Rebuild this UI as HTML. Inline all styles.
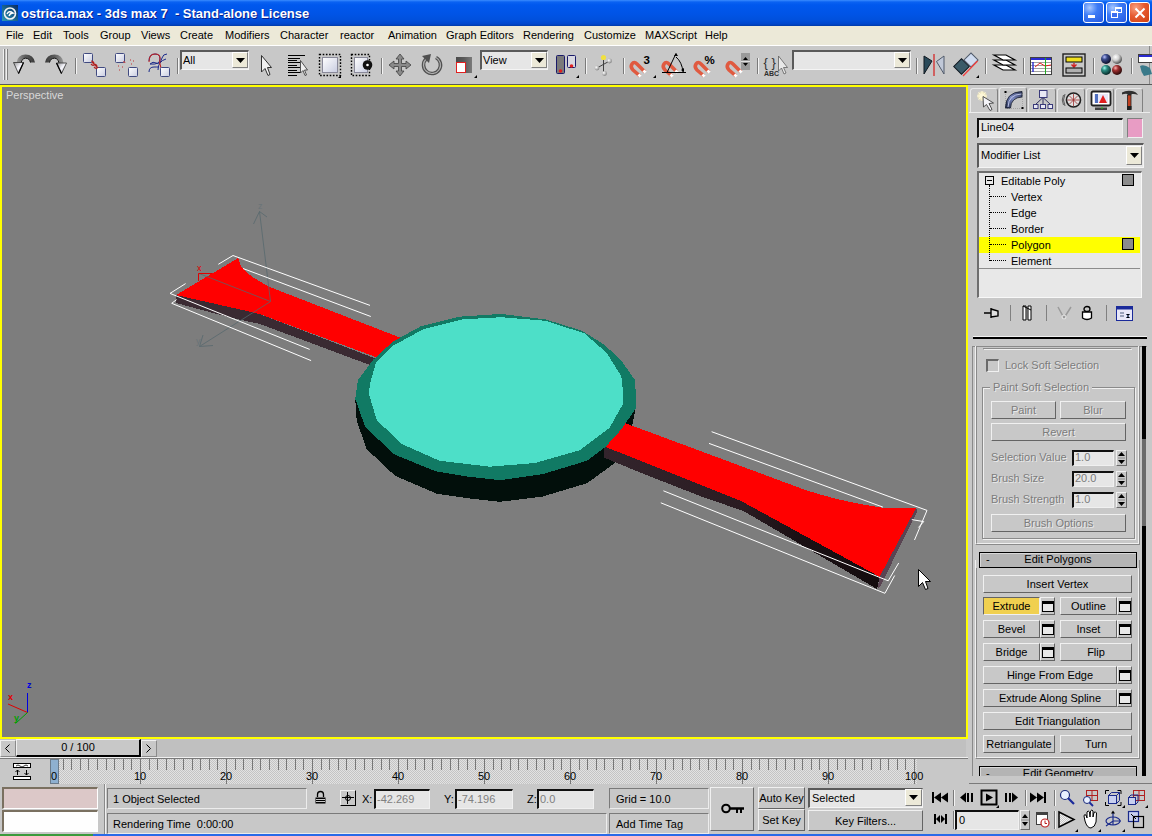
<!DOCTYPE html><html><head><meta charset="utf-8"><style>
*{margin:0;padding:0;box-sizing:border-box}
html,body{width:1152px;height:836px;overflow:hidden;background:#c8c8c8;font-family:"Liberation Sans",sans-serif;font-size:11px;color:#000}
div{position:absolute}
.t{white-space:pre;line-height:13px}
.btn{background:#c8c8c8;border-top:1px solid #f0f0f0;border-left:1px solid #f0f0f0;border-right:1px solid #646464;border-bottom:1px solid #646464;text-align:center;line-height:16px;white-space:pre}
.sunk{background:#e6e6e6;border-top:2px solid #141414;border-left:2px solid #141414;border-right:1px solid #f4f4f4;border-bottom:1px solid #f4f4f4}
.stat{background:#c8c8c8;border-top:1px solid #7a7a7a;border-left:1px solid #7a7a7a;border-right:1px solid #ececec;border-bottom:1px solid #ececec}
.sep{width:2px;border-left:1px solid #8a8a8a;border-right:1px solid #f2f2f2}
svg{position:absolute;overflow:visible}
</style></head><body>
<div style="left:0px;top:0px;width:1152px;height:26px;background:linear-gradient(#3a8cff 0px,#0a62f2 2px,#0058ee 5px,#0054e6 14px,#0050dc 20px,#0046cc 24px,#003aa8 26px)"></div>
<svg style="left:1px;top:4px" width="18" height="18" viewBox="0 0 18 18"><rect x="1" y="1" width="16" height="16" fill="#123a78"/><rect x="1" y="1" width="16" height="16" fill="url(#ig)"/><defs><linearGradient id="ig" x1="0" y1="1" x2="1" y2="0"><stop offset="0" stop-color="#2a9ab8"/><stop offset="1" stop-color="#0a2a60"/></linearGradient></defs><circle cx="9" cy="9.5" r="5.5" fill="none" stroke="#f4f4f4" stroke-width="1.6"/><path d="M6 10 q2 -4 6 -1 q-3 0 -4 3" fill="none" stroke="#fff" stroke-width="1.4"/></svg>
<div class="t" style="left:21px;top:6px;color:#fff;font-weight:bold;font-size:13px;line-height:15px;text-shadow:1px 1px #0a1e8c">ostrica.max - 3ds max 7  - Stand-alone License</div>
<div style="left:1083px;top:2px;width:21px;height:21px;border:1px solid #fff;border-radius:3px;background:radial-gradient(circle at 30% 25%,#a8c8ff 0,#3d7cf6 40%,#2458e0 100%)"><div style="left:4px;top:12px;width:7px;height:3px;background:#fff"></div></div>
<div style="left:1106px;top:2px;width:21px;height:21px;border:1px solid #fff;border-radius:3px;background:radial-gradient(circle at 30% 25%,#a8c8ff 0,#3d7cf6 40%,#2458e0 100%)"><div style="left:8px;top:4px;width:7px;height:6px;border:1px solid #fff;border-top-width:2px"></div><div style="left:4px;top:8px;width:7px;height:7px;border:1px solid #fff;border-top-width:2px;background:#3a6ef0"></div></div>
<div style="left:1129px;top:2px;width:21px;height:21px;border:1px solid #fff;border-radius:3px;background:radial-gradient(circle at 30% 25%,#f8a080 0,#e65a30 45%,#d04010 100%)"><svg style="left:4px;top:4px" width="12" height="12"><path d="M1.5 1.5 L10.5 10.5 M10.5 1.5 L1.5 10.5" stroke="#fff" stroke-width="2"/></svg></div>
<div style="left:0px;top:26px;width:1152px;height:19px;background:#ece9d8"></div>
<div class="t" style="left:6px;top:29px;line-height:13px">File</div>
<div class="t" style="left:33px;top:29px;line-height:13px">Edit</div>
<div class="t" style="left:63px;top:29px;line-height:13px">Tools</div>
<div class="t" style="left:100px;top:29px;line-height:13px">Group</div>
<div class="t" style="left:141px;top:29px;line-height:13px">Views</div>
<div class="t" style="left:180px;top:29px;line-height:13px">Create</div>
<div class="t" style="left:225px;top:29px;line-height:13px">Modifiers</div>
<div class="t" style="left:280px;top:29px;line-height:13px">Character</div>
<div class="t" style="left:340px;top:29px;line-height:13px">reactor</div>
<div class="t" style="left:388px;top:29px;line-height:13px">Animation</div>
<div class="t" style="left:446px;top:29px;line-height:13px">Graph Editors</div>
<div class="t" style="left:523px;top:29px;line-height:13px">Rendering</div>
<div class="t" style="left:584px;top:29px;line-height:13px">Customize</div>
<div class="t" style="left:645px;top:29px;line-height:13px">MAXScript</div>
<div class="t" style="left:705px;top:29px;line-height:13px">Help</div>
<div style="left:0px;top:45px;width:1152px;height:1px;background:#fff"></div>
<div style="left:0px;top:46px;width:1152px;height:38px;background:#c8c8c8"></div>
<div style="left:0px;top:84px;width:1152px;height:1px;background:#5a5a5a"></div>
<div style="left:1149px;top:46px;width:1px;height:38px;background:#8a8a8a"></div>
<div style="left:3px;top:49px;width:1px;height:31px;background:#f0f0f0"></div>
<div style="left:4px;top:49px;width:1px;height:31px;background:#808080"></div>
<div style="left:6px;top:49px;width:1px;height:31px;background:#f0f0f0"></div>
<div style="left:7px;top:49px;width:1px;height:31px;background:#808080"></div>
<svg style="left:0;top:46px" width="1152" height="38" viewBox="0 46 1152 38">
<defs><linearGradient id="gArc" x1="0" y1="0" x2="1" y2="0"><stop offset="0" stop-color="#9a9a9a"/><stop offset="0.5" stop-color="#5a5a5a"/><stop offset="1" stop-color="#3a3a3a"/></linearGradient><linearGradient id="gArc2" x1="1" y1="0" x2="0" y2="0"><stop offset="0" stop-color="#9a9a9a"/><stop offset="0.5" stop-color="#5a5a5a"/><stop offset="1" stop-color="#3a3a3a"/></linearGradient><linearGradient id="gSq" x1="0" y1="0" x2="1" y2="1"><stop offset="0" stop-color="#ffffff"/><stop offset="1" stop-color="#c8cce0"/></linearGradient><radialGradient id="gBall" cx="0.35" cy="0.35" r="0.7"><stop offset="0" stop-color="#fff"/><stop offset="1" stop-color="#808080"/></radialGradient><linearGradient id="gMag" x1="0" y1="0" x2="1" y2="1"><stop offset="0" stop-color="#ff9a80"/><stop offset="1" stop-color="#c83a20"/></linearGradient></defs>
<defs><linearGradient id="gHead" x1="0" y1="0" x2="1" y2="1"><stop offset="0" stop-color="#909090"/><stop offset="0.5" stop-color="#f8f8ff"/><stop offset="1" stop-color="#a0a0a0"/></linearGradient></defs>
<path d="M16.5 63 Q17.5 54.5 25.5 54.5 Q33.5 54.5 35 62.5 L30.5 62.5 Q29.5 58 25.5 58 Q21.5 58 20.5 63 Z" fill="url(#gArc)"/>
<path d="M21 63 Q22 58.2 25.5 58.2 Q29.5 58.2 30.5 62.5" fill="none" stroke="#101010" stroke-width="1"/>
<path d="M13.5 62.5 L23.5 62.5 L18.5 73.5 Z" fill="url(#gHead)" stroke="#303030" stroke-width="0.8"/>
<path d="M23.5 62.5 L18.5 73.5" stroke="#000" stroke-width="1.3"/>
<path d="M63.5 63 Q62.5 54.5 54.5 54.5 Q46.5 54.5 45 62.5 L49.5 62.5 Q50.5 58 54.5 58 Q58.5 58 59.5 63 Z" fill="url(#gArc2)"/>
<path d="M59 63 Q58 58.2 54.5 58.2 Q50.5 58.2 49.5 62.5" fill="none" stroke="#101010" stroke-width="1"/>
<path d="M56.5 63 L66.5 63 L61.5 73.5 Z" fill="url(#gHead)" stroke="#303030" stroke-width="0.8"/>
<path d="M56.5 63 L61.5 73.5" stroke="#000" stroke-width="1.3"/>
<rect x="75" y="58" width="1" height="16" fill="#7a7a7a"/><rect x="76" y="58" width="1" height="16" fill="#f4f4f4"/>
<rect x="83.5" y="53.5" width="9" height="9" rx="1" fill="url(#gSq)" stroke="#404a80" stroke-width="1"/>
<rect x="96.5" y="67.5" width="9" height="9" rx="1" fill="url(#gSq)" stroke="#404a80" stroke-width="1"/>
<path d="M91 61 q3 0 3 3 q0 3 -3 0 M94 64 q3 0 3 3 q0 3 -3 0 M92 62 l6 6" stroke="#b02020" stroke-width="1.2" fill="none"/>
<rect x="115.5" y="53.5" width="9" height="9" rx="1" fill="url(#gSq)" stroke="#404a80" stroke-width="1"/>
<rect x="128.5" y="67.5" width="9" height="9" rx="1" fill="url(#gSq)" stroke="#404a80" stroke-width="1"/>
<path d="M123 62 q2 -1 2 1 M118 66 h1 M122 67 h1 M119 70 h1 M130 60 h1 M133 61 h1 M131 64 h1" stroke="#c03030" stroke-width="1" fill="none"/>
<path d="M149 61 q0 -7 6 -7 q5 0 5 5 q0 6 -10 5 M150 64 q3 -3 6 -1 q4 2 6 -5 q1 -4 5 -4 M149 72 q0 -5 5 -5 q3 0 5 0 M158 70 q0 -5 2 -7 q2 -3 6 -4" stroke="#1a2a8a" stroke-width="1" fill="none"/>
<path d="M149 62 q0 -8 6 -8 q5 0 5 4 q-1 5 1 10" stroke="#c02020" stroke-width="1.1" fill="none"/>
<rect x="160.5" y="67.5" width="9" height="9" rx="1" fill="url(#gSq)" stroke="#404a80" stroke-width="1"/>
<rect x="177" y="58" width="1" height="16" fill="#7a7a7a"/><rect x="178" y="58" width="1" height="16" fill="#f4f4f4"/>
<path d="M261.5 55.5 L261.5 72 L265 68.5 L268 75.5 L270 74.5 L267.5 67.5 L271.5 67.5 Z" fill="#f0f0f0" stroke="#303030" stroke-width="1"/>
<rect x="288" y="55" width="17" height="1" fill="#000"/>
<rect x="288" y="58" width="12" height="1" fill="#000"/>
<rect x="288" y="60" width="9" height="1" fill="#000"/>
<rect x="288" y="62" width="12" height="1" fill="#000"/>
<rect x="288" y="65" width="9" height="1" fill="#000"/>
<rect x="288" y="67" width="12" height="1" fill="#000"/>
<rect x="288" y="70" width="9" height="1" fill="#000"/>
<rect x="288" y="72" width="12" height="1" fill="#000"/>
<rect x="288" y="75" width="9" height="1" fill="#000"/>
<path d="M300.5 60.5 L300.5 73 L303 70.5 L305 75.5 L306.5 75 L304.5 70 L307.5 70 Z" fill="#f0f0f0" stroke="#303030" stroke-width="0.8"/>
<rect x="322.5" y="57.5" width="15" height="15" fill="url(#gSq)" stroke="#8a8a9a"/>
<rect x="319.5" y="54.5" width="21" height="21" fill="none" stroke="#000" stroke-width="1.4" stroke-dasharray="1.6 1.6"/>
<path d="M338 78 L341 75 L341 78 Z" fill="#000"/>
<rect x="354.5" y="57.5" width="13" height="15" fill="url(#gSq)" stroke="#8a8a9a"/>
<rect x="351.5" y="54.5" width="18" height="21" fill="none" stroke="#000" stroke-width="1.4" stroke-dasharray="1.6 1.6"/>
<circle cx="367.5" cy="65" r="4.8" fill="#101010"/><circle cx="367.5" cy="65" r="1.3" fill="#fff"/>
<rect x="381" y="58" width="1" height="16" fill="#7a7a7a"/><rect x="382" y="58" width="1" height="16" fill="#f4f4f4"/>
<path d="M400 54 L404 59 L401.5 59 L401.5 63.5 L406 63.5 L406 61 L411 65 L406 69 L406 66.5 L401.5 66.5 L401.5 71 L404 71 L400 76 L396 71 L398.5 71 L398.5 66.5 L394 66.5 L394 69 L389 65 L394 61 L394 63.5 L398.5 63.5 L398.5 59 L396 59 Z" fill="#8a8a8a" stroke="#404040" stroke-width="0.8"/>
<path d="M426 59 A8.5 8.5 0 1 0 436 57.5" fill="none" stroke="#505050" stroke-width="3.6"/>
<path d="M426 59 A8.5 8.5 0 1 0 436 57.5" fill="none" stroke="#b0b0b0" stroke-width="1.2"/>
<path d="M422 56 L431 54 L429 63 Z" fill="#505050"/>
<rect x="456" y="57" width="16" height="16" fill="#5a5a5a"/><rect x="456" y="57" width="16" height="16" fill="url(#gArc2)" opacity="0.5"/>
<rect x="456.5" y="62.5" width="9" height="10" fill="#fff" stroke="#e02020" stroke-width="1"/>
<path d="M474 78 L477 75 L477 78 Z" fill="#000"/>
<rect x="556.5" y="55.5" width="8" height="18" rx="1" fill="#7a7a7a" stroke="#1a1a6a"/><rect x="567.5" y="55.5" width="8" height="12" rx="1" fill="#d8d8e0" stroke="#1a1a6a"/>
<circle cx="560.5" cy="71" r="1.8" fill="#e02020"/><circle cx="571.5" cy="66" r="1.8" fill="#e02020"/>
<path d="M576 78 L579 75 L579 78 Z" fill="#000"/>
<rect x="585" y="58" width="1" height="16" fill="#7a7a7a"/><rect x="586" y="58" width="1" height="16" fill="#f4f4f4"/>
<path d="M603.5 58 L603.5 73 M597 68 L609.5 61" stroke="#404040" stroke-width="1"/>
<circle cx="603.5" cy="57.5" r="2.6" fill="#f0e040"/><circle cx="609.5" cy="61" r="2.4" fill="url(#gBall)"/><circle cx="597" cy="68" r="2.4" fill="url(#gBall)"/><circle cx="604.5" cy="73.5" r="2.4" fill="url(#gBall)"/>
<rect x="623" y="58" width="1" height="16" fill="#7a7a7a"/><rect x="624" y="58" width="1" height="16" fill="#f4f4f4"/>
<path d="M645 72 L637 64 Q634 61 632 64 Q630 67 633 70 L640 76" fill="none" stroke="#e05a40" stroke-width="3.6" stroke-linecap="butt"/>
<rect x="643" y="70" width="3" height="3" fill="#fff" transform="rotate(45 644.5 71.5)"/><rect x="638" y="74" width="3" height="3" fill="#fff" transform="rotate(45 639.5 75.5)"/>
<text x="643.5" y="63.5" font-family="Liberation Sans" font-weight="bold" font-size="11.5" fill="#000">3</text>
<path d="M653 78 L656 75 L656 78 Z" fill="#000"/>
<path d="M677 72 L669 64 Q666 61 664 64 Q662 67 665 70 L672 76" fill="none" stroke="#e05a40" stroke-width="3.6" stroke-linecap="butt"/>
<rect x="675" y="70" width="3" height="3" fill="#fff" transform="rotate(45 676.5 71.5)"/><rect x="670" y="74" width="3" height="3" fill="#fff" transform="rotate(45 671.5 75.5)"/>
<path d="M662 72.5 H686 M667 72.5 L676 53.5 M676 57 Q682 62 683 72" stroke="#000" stroke-width="1" fill="none"/><path d="M674 56 l4 0 l-2 -3 Z M681 70 l3 2 l0 -4 Z" fill="#000"/>
<path d="M709 72 L701 64 Q698 61 696 64 Q694 67 697 70 L704 76" fill="none" stroke="#e05a40" stroke-width="3.6" stroke-linecap="butt"/>
<rect x="707" y="70" width="3" height="3" fill="#fff" transform="rotate(45 708.5 71.5)"/><rect x="702" y="74" width="3" height="3" fill="#fff" transform="rotate(45 703.5 75.5)"/>
<text x="704.5" y="63.5" font-family="Liberation Sans" font-weight="bold" font-size="11.5" fill="#000">%</text>
<path d="M741 72 L733 64 Q730 61 728 64 Q726 67 729 70 L736 76" fill="none" stroke="#e05a40" stroke-width="3.6" stroke-linecap="butt"/>
<rect x="739" y="70" width="3" height="3" fill="#fff" transform="rotate(45 740.5 71.5)"/><rect x="734" y="74" width="3" height="3" fill="#fff" transform="rotate(45 735.5 75.5)"/>
<rect x="741" y="53" width="9" height="17" fill="#9a9a9a"/><path d="M743 60 h5 l-2.5 -3 Z M743 63 h5 l-2.5 3 Z" fill="#000"/><rect x="741" y="61" width="9" height="1" fill="#e0e0e0"/>
<rect x="757" y="58" width="1" height="16" fill="#7a7a7a"/><rect x="758" y="58" width="1" height="16" fill="#f4f4f4"/>
<text x="763.5" y="66.5" font-family="Liberation Sans" font-size="13" fill="#303030">{ }</text>
<text x="764" y="76" font-family="Liberation Sans" font-weight="bold" font-size="7" fill="#303030">ABC</text>
<path d="M778.5 56 L778.5 71 L781.5 68 L784 74 L786 73 L783.5 67.5 L787.5 67.5 Z" fill="#e8e8e8" stroke="#606060" stroke-width="0.8"/>
<rect x="916" y="58" width="1" height="16" fill="#7a7a7a"/><rect x="917" y="58" width="1" height="16" fill="#f4f4f4"/>
<path d="M924 56 L924 74 L932 61 Z" fill="#2a4a5a" stroke="#101820" stroke-width="1"/>
<rect x="933" y="54" width="2" height="22" fill="#d06060"/>
<path d="M944 56 L944 74 L936.5 61.5 Z" fill="#c0c8d8" stroke="#505a6a" stroke-width="1"/>
<rect x="956" y="61" width="11" height="11" fill="#3a5a68" stroke="#101820" transform="rotate(45 961.5 66.5)"/>
<rect x="966" y="55" width="10" height="10" fill="#d0dcf0" stroke="#505a6a" transform="rotate(45 971 60)"/>
<path d="M963 76 L977.5 61" stroke="#f04040" stroke-width="1.3"/>
<path d="M976 78 L979 75 L979 78 Z" fill="#000"/>
<rect x="985" y="58" width="1" height="16" fill="#7a7a7a"/><rect x="986" y="58" width="1" height="16" fill="#f4f4f4"/>
<path d="M994 65 L1006 65 L1015 70 L1003 70 Z" fill="#fff" stroke="#000" stroke-width="1.2"/>
<path d="M994 60 L1006 60 L1015 65 L1003 65 Z" fill="#fff" stroke="#000" stroke-width="1.2"/>
<path d="M994 55 L1006 55 L1015 60 L1003 60 Z" fill="#fff" stroke="#000" stroke-width="1.2"/>
<rect x="1023" y="58" width="1" height="16" fill="#7a7a7a"/><rect x="1024" y="58" width="1" height="16" fill="#f4f4f4"/>
<rect x="1030.5" y="57.5" width="21" height="17" fill="#fff" stroke="#404040"/><rect x="1031" y="58" width="20" height="2" fill="#2a2ad0"/>
<rect x="1031" y="62" width="20" height="1" fill="#a0a0a0"/>
<rect x="1031" y="65" width="20" height="1" fill="#a0a0a0"/>
<rect x="1031" y="68" width="20" height="1" fill="#a0a0a0"/>
<rect x="1031" y="71" width="20" height="1" fill="#a0a0a0"/>
<rect x="1032" y="62" width="2" height="10" fill="#2a2ad0" opacity="0.7"/><path d="M1035 67 L1040 63 L1045 66 L1051 65" stroke="#e02020" fill="none"/><rect x="1045" y="58" width="1" height="16" fill="#20b020"/>
<rect x="1063" y="54" width="22" height="22" fill="#c8c8c8" stroke="#202020" stroke-width="1.4"/><rect x="1066" y="57" width="16" height="5" fill="#f0e020" stroke="#000"/><path d="M1074 63 v3 M1071.5 64.5 L1074 67 L1076.5 64.5" stroke="#d02020" fill="none" stroke-width="1.4"/><rect x="1066" y="68" width="16" height="5" fill="#b0b0b0" stroke="#000"/>
<rect x="1093" y="58" width="1" height="16" fill="#7a7a7a"/><rect x="1094" y="58" width="1" height="16" fill="#f4f4f4"/>
<defs><radialGradient id="mb1" cx="0.35" cy="0.3" r="0.75"><stop offset="0" stop-color="#b8c0ff"/><stop offset="0.35" stop-color="#3a4a8a"/><stop offset="1" stop-color="#0a0a20"/></radialGradient><radialGradient id="mb2" cx="0.35" cy="0.3" r="0.75"><stop offset="0" stop-color="#ffffff"/><stop offset="0.45" stop-color="#d0d0d0"/><stop offset="1" stop-color="#404040"/></radialGradient><radialGradient id="mb3" cx="0.35" cy="0.3" r="0.75"><stop offset="0" stop-color="#a0fff0"/><stop offset="0.35" stop-color="#2a8a80"/><stop offset="1" stop-color="#052020"/></radialGradient><radialGradient id="mb4" cx="0.35" cy="0.3" r="0.75"><stop offset="0" stop-color="#ffb0b0"/><stop offset="0.35" stop-color="#a03030"/><stop offset="1" stop-color="#200505"/></radialGradient></defs>
<circle cx="1106" cy="59" r="5" fill="url(#mb1)"/>
<circle cx="1117" cy="59" r="5" fill="url(#mb2)"/>
<circle cx="1106" cy="70" r="5" fill="url(#mb3)"/>
<circle cx="1117" cy="70" r="5" fill="url(#mb4)"/>
<rect x="1131" y="58" width="1" height="16" fill="#7a7a7a"/><rect x="1132" y="58" width="1" height="16" fill="#f4f4f4"/>
<rect x="1138.5" y="54.5" width="14" height="8" fill="#fff" stroke="#404040"/><rect x="1139" y="55" width="13" height="2" fill="#2a2ad0"/><path d="M1140 66 Q1144 64 1150 68 L1152 74 L1144 76 Q1141 72 1140 66" fill="#3a7a8a"/>
</svg>
<div style="left:180px;top:50px;width:69px;height:20px;background:#e6e6e6;border-top:2px solid #5a5a5a;border-left:2px solid #5a5a5a;border-right:1px solid #f4f4f4;border-bottom:1px solid #f4f4f4"></div>
<div class="t" style="left:183px;top:54px;">All</div>
<div style="left:232px;top:52px;width:16px;height:16px;background:#ece9d8;border-top:1px solid #fff;border-left:1px solid #fff;border-right:1px solid #808080;border-bottom:1px solid #808080"></div>
<svg style="left:236px;top:58px" width="9" height="5"><path d="M0 0 h9 L4.5 5 Z" fill="#000"/></svg>
<div style="left:480px;top:50px;width:68px;height:20px;background:#e6e6e6;border-top:2px solid #5a5a5a;border-left:2px solid #5a5a5a;border-right:1px solid #f4f4f4;border-bottom:1px solid #f4f4f4"></div>
<div class="t" style="left:483px;top:54px;">View</div>
<div style="left:531px;top:52px;width:16px;height:16px;background:#ece9d8;border-top:1px solid #fff;border-left:1px solid #fff;border-right:1px solid #808080;border-bottom:1px solid #808080"></div>
<svg style="left:535px;top:58px" width="9" height="5"><path d="M0 0 h9 L4.5 5 Z" fill="#000"/></svg>
<div style="left:792px;top:50px;width:119px;height:20px;background:#e6e6e6;border-top:2px solid #5a5a5a;border-left:2px solid #5a5a5a;border-right:1px solid #f4f4f4;border-bottom:1px solid #f4f4f4"></div>
<div style="left:894px;top:52px;width:16px;height:16px;background:#ece9d8;border-top:1px solid #fff;border-left:1px solid #fff;border-right:1px solid #808080;border-bottom:1px solid #808080"></div>
<svg style="left:898px;top:58px" width="9" height="5"><path d="M0 0 h9 L4.5 5 Z" fill="#000"/></svg>
<div style="left:0px;top:85px;width:968px;height:654px;background:#ffff00"></div>
<div style="left:2px;top:87px;width:964px;height:650px;background:#7d7d7d;overflow:hidden"></div>
<div class="t" style="left:6px;top:89px;color:#d8d8d8">Perspective</div>
<div style="left:2px;top:87px;width:964px;height:650px;overflow:hidden"><svg style="left:-2px;top:-87px" width="1152" height="836" viewBox="0 0 1152 836" shape-rendering="crispEdges">
<polygon fill="#3a2a32" points="176,295 252,312.2 260,314.2 395,366 392,375 368.3,364.4 260,324 230,317.5 176,303"/>
<polygon fill="#ff0000" points="176,295 238.1,258.1 240.5,265.3 244.4,270.1 252,276.8 261.6,282.5 269.2,286.8 420,345.3 400,366 260,314.2 252,312.2"/>
<polygon fill="#020f0b" points="358.2,380 355.2,398.7 356.7,420.4 366.4,448.8 394.9,475.7 436.7,493.7 466.6,498.1 500,501.8 542.3,496.6 587.2,483.1 614,463.7 630,436 635.7,408.4 635,380"/>
<defs><linearGradient id="rs" x1="0" y1="0" x2="1" y2="0"><stop offset="0" stop-color="#33242c"/><stop offset="0.5" stop-color="#2a1c22"/><stop offset="0.7" stop-color="#1a1014"/><stop offset="1" stop-color="#140c0e"/></linearGradient></defs>
<polygon fill="url(#rs)" points="604.3,446.5 640,460.5 742,501.5 879.6,576.8 877,589 743.4,511 700,496 640,472.5 604.3,457.7"/>
<polygon fill="#5a4452" points="915.8,508.4 917.5,510.5 880.5,586 877.5,589 879.6,576.8"/>
<polygon fill="#ff0000" points="625.3,423.3 640,428.6 804,489.5 820,494.5 839,499.5 860,504 884,508 915.8,508.4 879.6,576.8 742,501.5 640,460.5 604.3,446.5"/>
<polygon fill="#117a64" points="501.1,313.9 545.5,319.4 581.7,330.6 603.9,344.4 620.5,359.7 635,380 635.8,394.4 635.7,408.4 621.5,429.3 605.1,447.3 587.2,460.7 542.3,474.2 500,480.2 466.6,476.5 435.2,471.2 393.4,454 365,426.4 355.2,398.7 358,380 373.3,359.7 392.8,341.7 420.6,326.4 459.4,316.7"/>
<polygon fill="#4ddfc8" points="501.1,317.2 545.5,320.8 584.4,333.3 606.7,352.8 620.5,375 622.3,380 623,403.9 609.6,427.8 579.7,450.3 534.8,463 490,466.7 439.7,460.8 402.3,444.3 376.9,420.4 368.7,393.5 370.9,380 376.1,362.5 392.8,345.8 423.3,329.2 462.2,319.4"/>
<g stroke="#56686e" stroke-width="1" fill="none" shape-rendering="auto" opacity="0.75"><path d="M270.5 301.5 L199.5 346.5 M199.5 346.5 L213 345.5 M199.5 346.5 L203 335"/><path d="M270.5 301.5 L259.5 211.5 M259.5 211.5 L253.5 224 M259.5 211.5 L267 217"/><path d="M270.5 301.5 L199 273.5"/></g>
<g stroke="#ffffff" stroke-width="1" fill="none" shape-rendering="auto">
<polyline points="218.3,264.3 233,255.5 370,305.4"/>
<polyline points="243,268.5 370.8,316.5"/>
<polyline points="185.6,283.6 170,293.4 309.7,349.4"/>
<polyline points="176.6,299.6 171.7,303.3 311.1,360.6"/>
<polyline points="711.6,431.7 927,510.4 914.5,540"/>
<polyline points="709,443.4 882.9,507.1"/>
<polyline points="911.8,519.6 923.7,521.6 918.4,527.5"/>
<polyline points="663.4,490.8 888.2,580.8 898.7,563"/>
<polyline points="660.8,502.8 884.9,593.3 894.7,575.5"/>
</g>
<g shape-rendering="auto">
<path d="M198.5 281 L198.5 273.5 L212 273.5" stroke="#e00000" fill="none"/>
<text x="197" y="271" font-family="Liberation Sans" font-size="9" fill="#e00000">x</text>
<text x="258" y="209" font-family="Liberation Sans" font-size="9" fill="#6a7478">z</text>
<text x="196" y="344" font-family="Liberation Sans" font-size="9" fill="#6a7478">y</text>
</g>
<g shape-rendering="auto"><path d="M27.5 712.5 L27.5 693" stroke="#0000e0" stroke-width="1"/><path d="M27.5 712.5 L8 704" stroke="#e00000" stroke-width="1"/><path d="M27.5 712.5 L15.5 723.5" stroke="#00a000" stroke-width="1"/><text x="27" y="687.5" font-family="Liberation Sans" font-size="9" font-weight="bold" fill="#0000e0">z</text><text x="8" y="699.5" font-family="Liberation Sans" font-size="9" font-weight="bold" fill="#e00000">x</text><text x="14" y="721" font-family="Liberation Sans" font-size="9" font-weight="bold" fill="#00a000">y</text></g>
<path shape-rendering="auto" d="M918.5 569.5 L918.5 586.5 L922.5 582.5 L925.5 589.5 L928 588.5 L925.5 581.5 L930.5 581.5 Z" fill="#fff" stroke="#000" stroke-width="1"/>
</svg></div>
<div style="left:970px;top:88px;width:28px;height:25px;border-top:1px solid #e8e8e8;border-left:1px solid #e8e8e8;border-right:1px solid #808080;border-radius:3px 3px 0 0;background:#c8c8c8"></div>
<div style="left:999px;top:87px;width:28px;height:26px;border-top:1px solid #e8e8e8;border-left:1px solid #e8e8e8;border-right:1px solid #808080;border-radius:3px 3px 0 0;background:#c8c8c8"></div>
<div style="left:1028px;top:88px;width:28px;height:25px;border-top:1px solid #e8e8e8;border-left:1px solid #e8e8e8;border-right:1px solid #808080;border-radius:3px 3px 0 0;background:#c8c8c8"></div>
<div style="left:1057px;top:88px;width:28px;height:25px;border-top:1px solid #e8e8e8;border-left:1px solid #e8e8e8;border-right:1px solid #808080;border-radius:3px 3px 0 0;background:#c8c8c8"></div>
<div style="left:1086px;top:88px;width:28px;height:25px;border-top:1px solid #e8e8e8;border-left:1px solid #e8e8e8;border-right:1px solid #808080;border-radius:3px 3px 0 0;background:#c8c8c8"></div>
<div style="left:1115px;top:88px;width:28px;height:25px;border-top:1px solid #e8e8e8;border-left:1px solid #e8e8e8;border-right:1px solid #808080;border-radius:3px 3px 0 0;background:#c8c8c8"></div>
<div style="left:969px;top:112px;width:181px;height:1px;background:#ececec"></div>
<svg style="left:966px;top:84px" width="94" height="32" viewBox="966 84 94 32"><defs><radialGradient id="star" cx="0.5" cy="0.5" r="0.5"><stop offset="0" stop-color="#fffff0"/><stop offset="0.6" stop-color="#f4ecc0"/><stop offset="1" stop-color="#f4ecc0" stop-opacity="0"/></radialGradient><linearGradient id="arcg" x1="0" y1="1" x2="1" y2="0"><stop offset="0" stop-color="#20284a"/><stop offset="0.5" stop-color="#7a88c0"/><stop offset="1" stop-color="#30385a"/></linearGradient></defs><circle cx="982" cy="96" r="5.5" fill="url(#star)"/><path d="M982 91 v10 M977 96 h10 M978.5 92.5 l7 7 M985.5 92.5 l-7 7" stroke="#fff8d8" stroke-width="1"/><path d="M983 96.5 L983.5 107 L986.5 104.5 L990 110.5 L992 109.5 L989 103.5 L993.5 103 Z" fill="#f4f4f8" stroke="#404040" stroke-width="0.9"/><path d="M1005.5 92 h17 v16.5 h-17 Z" fill="none" stroke="#808080" stroke-width="0.5" stroke-dasharray="1 1"/><rect x="1004.5" y="91" width="2" height="2" fill="#000"/><rect x="1021.5" y="107" width="2" height="2" fill="#000"/><path d="M1005.5 108 Q1005.5 92 1022 91.5 L1022 97 Q1011 97.5 1010.5 108 Z" fill="url(#arcg)" stroke="#101828" stroke-width="0.8"/><path d="M1008 107 Q1008.5 94.5 1021.5 94" fill="none" stroke="#c8d0f0" stroke-width="0.9"/><path d="M1043 97.5 L1035.5 104.5 M1043 97.5 L1043 104.5 M1043 97.5 L1050.5 104.5" stroke="#303060" stroke-width="1"/><rect x="1039.5" y="90.5" width="7.5" height="7" fill="#e8e8f4" stroke="#3a3a7a" stroke-width="1"/><rect x="1033.5" y="104.5" width="4.5" height="4" fill="#e8e8f4" stroke="#3a3a7a" stroke-width="1"/><rect x="1040.5" y="104.5" width="5" height="4" fill="#e8e8f4" stroke="#3a3a7a" stroke-width="1"/><rect x="1048" y="104.5" width="4.5" height="4" fill="#e8e8f4" stroke="#3a3a7a" stroke-width="1"/></svg>
<svg style="left:1061px;top:91px" width="22" height="18" viewBox="0 0 22 18"><circle cx="12.5" cy="9" r="7" fill="#e0e0e0" stroke="#202020" stroke-width="1.6"/><path d="M12.5 3 v12 M6.5 9 h12 M8.5 5 l8 8 M16.5 5 l-8 8" stroke="#a03030" stroke-width="0.8"/><path d="M4 3 Q1 9 4 15 M2.5 4 Q0 9 2.5 14" stroke="#404040" fill="none" stroke-width="0.8"/></svg>
<svg style="left:1090px;top:90px" width="22" height="21" viewBox="0 0 22 21"><rect x="1.5" y="1.5" width="19" height="14" rx="1.5" fill="#fff" stroke="#202020" stroke-width="1.8"/><rect x="4" y="4" width="14" height="9" fill="#e8e8f8"/><rect x="5" y="4" width="3" height="9" fill="#5070c0"/><path d="M9 13 L13 5 L17 13 Z" fill="#e02020"/><rect x="5" y="17.5" width="12" height="2.5" fill="#404040"/><rect x="11" y="17.5" width="2" height="1" fill="#20c020"/></svg>
<svg style="left:1120px;top:89px" width="20" height="22" viewBox="0 0 20 22"><path d="M2 3.5 Q6 1 12 2 Q16 2.5 18 6 Q15 4.5 12 5 L11 6 L8 6 L7.5 5 Q5 4.5 2 5.5 Z" fill="#303030"/><rect x="7.5" y="6" width="3.5" height="14" fill="#c04020" stroke="#202020" stroke-width="0.8"/><rect x="7" y="17" width="4.5" height="4" fill="#202020"/></svg>
<div style="left:977px;top:118px;width:146px;height:20px;background:#e6e6e6;border-top:2px solid #101010;border-left:2px solid #101010;border-right:1px solid #f0f0f0;border-bottom:1px solid #f0f0f0"></div>
<div class="t" style="left:981px;top:121px;">Line04</div>
<div style="left:1127px;top:118px;width:16px;height:20px;background:#e89cc4;border-top:1px solid #808080;border-left:1px solid #808080;border-right:1px solid #f0f0f0;border-bottom:1px solid #f0f0f0"></div>
<div style="left:977px;top:143px;width:167px;height:25px;background:#e6e6e6;border-top:2px solid #5a5a5a;border-left:2px solid #5a5a5a;border-right:1px solid #f4f4f4;border-bottom:1px solid #f4f4f4"></div>
<div class="t" style="left:981px;top:149px;">Modifier List</div>
<div style="left:1126px;top:146px;width:16px;height:19px;background:#ece9d8;border-top:1px solid #fff;border-left:1px solid #fff;border-right:1px solid #808080;border-bottom:1px solid #808080"></div>
<svg style="left:1130px;top:153px" width="9" height="5"><path d="M0 0 h9 L4.5 5 Z" fill="#000"/></svg>
<div style="left:977px;top:171px;width:165px;height:127px;background:#e8e8e8;border-top:2px solid #6e6e6e;border-left:2px solid #6e6e6e;border-right:1px solid #f8f8f8;border-bottom:1px solid #f8f8f8"></div>
<div style="left:979px;top:237px;width:161px;height:16px;background:#ffff00"></div>
<div style="left:979px;top:268px;width:161px;height:1px;background:#8c8c8c"></div>
<div style="left:985px;top:176px;width:9px;height:9px;border:1px solid #000;background:#e8e8e8"><div style="left:1px;top:3px;width:5px;height:1px;background:#000"></div></div>
<div style="left:989px;top:185px;width:1px;height:76px;border-left:1px dotted #000"></div>
<div style="left:990px;top:196px;width:16px;height:1px;border-top:1px dotted #000"></div>
<div style="left:990px;top:212px;width:16px;height:1px;border-top:1px dotted #000"></div>
<div style="left:990px;top:228px;width:16px;height:1px;border-top:1px dotted #000"></div>
<div style="left:990px;top:244px;width:16px;height:1px;border-top:1px dotted #000"></div>
<div style="left:990px;top:260px;width:16px;height:1px;border-top:1px dotted #000"></div>
<div class="t" style="left:1001px;top:175px;">Editable Poly</div>
<div class="t" style="left:1011px;top:191px;">Vertex</div>
<div class="t" style="left:1011px;top:207px;">Edge</div>
<div class="t" style="left:1011px;top:223px;">Border</div>
<div class="t" style="left:1011px;top:239px;">Polygon</div>
<div class="t" style="left:1011px;top:255px;">Element</div>
<div style="left:1122px;top:174px;width:12px;height:12px;background:#8c8c8c;border:1px solid #000"></div>
<div style="left:1122px;top:238px;width:12px;height:12px;background:#8c8c8c;border:1px solid #000"></div>
<svg style="left:983px;top:306px" width="17" height="14" viewBox="0 0 17 14"><path d="M1 7 h7" stroke="#000" stroke-width="1.5"/><path d="M8 2 v10 M8 3 L15 5 L15 10 L8 11" stroke="#000" stroke-width="1.4" fill="#e0e0e0"/></svg>
<div style="left:1010px;top:305px;width:1px;height:16px;background:#808080"></div>
<svg style="left:1021px;top:305px" width="12" height="16" viewBox="0 0 12 16"><path d="M2 1 L5 1 L5 15 L2 15 Z M7 1 L10 1 L10 15 L7 15 Z" fill="#fff" stroke="#000" stroke-width="1"/><path d="M2 1 L10 5" stroke="#000" stroke-width="1"/></svg>
<div style="left:1046px;top:305px;width:1px;height:16px;background:#808080"></div>
<svg style="left:1057px;top:306px" width="15" height="14" viewBox="0 0 15 14"><path d="M1 1 L7 12 L14 1" stroke="#9a9a9a" stroke-width="1.5" fill="none"/><circle cx="7" cy="11" r="2" fill="none" stroke="#e8e8e8"/></svg>
<svg style="left:1081px;top:305px" width="12" height="16" viewBox="0 0 12 16"><ellipse cx="6" cy="4" rx="3" ry="2.5" fill="none" stroke="#000" stroke-width="1.3"/><path d="M1.5 7 h9 v6 q-4.5 3 -9 0 Z" fill="#fff" stroke="#000" stroke-width="1.3"/></svg>
<div style="left:1106px;top:305px;width:1px;height:16px;background:#808080"></div>
<svg style="left:1116px;top:306px" width="17" height="15" viewBox="0 0 17 15"><rect x="0.5" y="0.5" width="16" height="14" fill="#e8e8f8" stroke="#1a2a9a"/><rect x="0.5" y="0.5" width="16" height="3" fill="#1a2a9a"/><path d="M4 7 h4 M4 10 h4 M10 8 l2 2 l2 -2 M10 12 l2 -2 l2 2" stroke="#4a5a7a" stroke-width="1"/></svg>
<div style="left:973px;top:336px;width:174px;height:1px;background:#f0f0f0"></div>
<div style="left:973px;top:337px;width:174px;height:2px;background:#000"></div>
<div style="left:972px;top:346px;width:175px;height:431px;border-left:1px solid #8a8a8a;border-top:1px solid #8a8a8a"></div>
<div style="left:975px;top:346px;width:165px;height:199px;border-left:1px solid #f0f0f0;border-right:1px solid #8a8a8a;border-bottom:1px solid #8a8a8a"></div>
<div style="left:976px;top:346px;width:163px;height:198px;border-left:1px solid #8a8a8a;border-right:1px solid #f0f0f0;border-bottom:1px solid #f0f0f0"></div>
<div style="left:1142px;top:346px;width:4px;height:431px;background:#000"></div>
<div style="left:1142px;top:439px;width:4px;height:87px;background:#6a6a6a"></div>
<div style="left:983px;top:348px;width:149px;height:2px;border-top:1px solid #8a8a8a;border-bottom:1px solid #f0f0f0;border-left:1px solid #8a8a8a;border-right:1px solid #f0f0f0"></div>
<div style="left:986px;top:359px;width:13px;height:13px;border-top:2px solid #6a6a6a;border-left:2px solid #6a6a6a;border-right:1px solid #f0f0f0;border-bottom:1px solid #f0f0f0;background:#c8c8c8"></div>
<div class="t" style="left:1005px;top:359px;color:#7c7c7c;text-shadow:1px 1px 0 #eaeaea">Lock Soft Selection</div>
<div style="left:982px;top:387px;width:153px;height:152px;border:1px solid #8a8a8a;box-shadow:1px 1px 0 #f0f0f0, inset 1px 1px 0 #f0f0f0"></div>
<div class="t" style="left:990px;top:381px;color:#7c7c7c;text-shadow:1px 1px 0 #eaeaea;background:#c8c8c8"> Paint Soft Selection </div>
<div class="btn" style="left:991px;top:401px;width:65px;height:18px;color:#7c7c7c;text-shadow:1px 1px 0 #eaeaea">Paint</div>
<div class="btn" style="left:1060px;top:401px;width:66px;height:18px;color:#7c7c7c;text-shadow:1px 1px 0 #eaeaea">Blur</div>
<div class="btn" style="left:991px;top:423px;width:135px;height:18px;color:#7c7c7c;text-shadow:1px 1px 0 #eaeaea">Revert</div>
<div class="t" style="left:991px;top:451px;color:#7c7c7c;text-shadow:1px 1px 0 #eaeaea">Selection Value</div>
<div style="left:1072px;top:450px;width:42px;height:16px;background:#e6e6e6;border-top:2px solid #101010;border-left:2px solid #101010;border-right:1px solid #f0f0f0;border-bottom:1px solid #f0f0f0"></div>
<div class="t" style="left:1075px;top:451px;color:#7c7c7c;text-shadow:1px 1px 0 #eaeaea">1.0</div>
<div style="left:1116px;top:450px;width:11px;height:16px;border-top:1px solid #f0f0f0;border-left:1px solid #f0f0f0;border-right:1px solid #6a6a6a;border-bottom:1px solid #6a6a6a"></div>
<svg style="left:1118px;top:452px" width="7" height="12"><path d="M3.5 0 L7 4 H0 Z M0 8 H7 L3.5 12 Z" fill="#000"/><path d="M0 6 H7" stroke="#8a8a8a"/></svg>
<div class="t" style="left:991px;top:472px;color:#7c7c7c;text-shadow:1px 1px 0 #eaeaea">Brush Size</div>
<div style="left:1072px;top:471px;width:42px;height:16px;background:#e6e6e6;border-top:2px solid #101010;border-left:2px solid #101010;border-right:1px solid #f0f0f0;border-bottom:1px solid #f0f0f0"></div>
<div class="t" style="left:1075px;top:472px;color:#7c7c7c;text-shadow:1px 1px 0 #eaeaea">20.0</div>
<div style="left:1116px;top:471px;width:11px;height:16px;border-top:1px solid #f0f0f0;border-left:1px solid #f0f0f0;border-right:1px solid #6a6a6a;border-bottom:1px solid #6a6a6a"></div>
<svg style="left:1118px;top:473px" width="7" height="12"><path d="M3.5 0 L7 4 H0 Z M0 8 H7 L3.5 12 Z" fill="#000"/><path d="M0 6 H7" stroke="#8a8a8a"/></svg>
<div class="t" style="left:991px;top:493px;color:#7c7c7c;text-shadow:1px 1px 0 #eaeaea">Brush Strength</div>
<div style="left:1072px;top:492px;width:42px;height:16px;background:#e6e6e6;border-top:2px solid #101010;border-left:2px solid #101010;border-right:1px solid #f0f0f0;border-bottom:1px solid #f0f0f0"></div>
<div class="t" style="left:1075px;top:493px;color:#7c7c7c;text-shadow:1px 1px 0 #eaeaea">1.0</div>
<div style="left:1116px;top:492px;width:11px;height:16px;border-top:1px solid #f0f0f0;border-left:1px solid #f0f0f0;border-right:1px solid #6a6a6a;border-bottom:1px solid #6a6a6a"></div>
<svg style="left:1118px;top:494px" width="7" height="12"><path d="M3.5 0 L7 4 H0 Z M0 8 H7 L3.5 12 Z" fill="#000"/><path d="M0 6 H7" stroke="#8a8a8a"/></svg>
<div class="btn" style="left:991px;top:514px;width:135px;height:18px;color:#7c7c7c;text-shadow:1px 1px 0 #eaeaea">Brush Options</div>
<div style="left:979px;top:552px;width:158px;height:16px;background:#b4b4b4;border:1px solid #000;box-shadow:inset 1px 1px 0 #d8d8d8;text-align:center;line-height:13px">Edit Polygons</div>
<div class="t" style="left:986px;top:553px;">-</div>
<div style="left:975px;top:560px;width:165px;height:199px;border-left:1px solid #f0f0f0;border-right:1px solid #8a8a8a;border-bottom:1px solid #8a8a8a"></div>
<div style="left:976px;top:568px;width:163px;height:190px;border-left:1px solid #8a8a8a;border-right:1px solid #f0f0f0;border-bottom:1px solid #f0f0f0"></div>
<div style="left:979px;top:552px;width:158px;height:16px;background:#b4b4b4;border:1px solid #000;box-shadow:inset 1px 1px 0 #d8d8d8;text-align:center;line-height:13px">Edit Polygons</div>
<div class="t" style="left:986px;top:553px;">-</div>
<div class="btn" style="left:983px;top:575px;width:149px;height:18px;">Insert Vertex</div>
<div class="btn" style="left:983px;top:597px;width:57px;height:18px;background:#f0d050;border-top:1px solid #646464;border-left:1px solid #646464;border-right:1px solid #f0f0f0;border-bottom:1px solid #f0f0f0">Extrude</div>
<div class="btn" style="left:1040px;top:597px;width:15px;height:18px;"><div style="left:1px;top:3px;width:12px;height:11px;border:1px solid #000;border-top-width:3px;background:#e8e8e8"></div></div>
<div class="btn" style="left:1060px;top:597px;width:57px;height:18px;">Outline</div>
<div class="btn" style="left:1117px;top:597px;width:15px;height:18px;"><div style="left:1px;top:3px;width:12px;height:11px;border:1px solid #000;border-top-width:3px;background:#e8e8e8"></div></div>
<div class="btn" style="left:983px;top:620px;width:57px;height:18px;">Bevel</div>
<div class="btn" style="left:1040px;top:620px;width:15px;height:18px;"><div style="left:1px;top:3px;width:12px;height:11px;border:1px solid #000;border-top-width:3px;background:#e8e8e8"></div></div>
<div class="btn" style="left:1060px;top:620px;width:57px;height:18px;">Inset</div>
<div class="btn" style="left:1117px;top:620px;width:15px;height:18px;"><div style="left:1px;top:3px;width:12px;height:11px;border:1px solid #000;border-top-width:3px;background:#e8e8e8"></div></div>
<div class="btn" style="left:983px;top:643px;width:57px;height:18px;">Bridge</div>
<div class="btn" style="left:1040px;top:643px;width:15px;height:18px;"><div style="left:1px;top:3px;width:12px;height:11px;border:1px solid #000;border-top-width:3px;background:#e8e8e8"></div></div>
<div class="btn" style="left:1060px;top:643px;width:72px;height:18px;">Flip</div>
<div class="btn" style="left:983px;top:666px;width:134px;height:18px;">Hinge From Edge</div>
<div class="btn" style="left:1117px;top:666px;width:15px;height:18px;"><div style="left:1px;top:3px;width:12px;height:11px;border:1px solid #000;border-top-width:3px;background:#e8e8e8"></div></div>
<div class="btn" style="left:983px;top:689px;width:134px;height:18px;">Extrude Along Spline</div>
<div class="btn" style="left:1117px;top:689px;width:15px;height:18px;"><div style="left:1px;top:3px;width:12px;height:11px;border:1px solid #000;border-top-width:3px;background:#e8e8e8"></div></div>
<div class="btn" style="left:983px;top:712px;width:149px;height:18px;">Edit Triangulation</div>
<div class="btn" style="left:983px;top:735px;width:72px;height:18px;">Retriangulate</div>
<div class="btn" style="left:1060px;top:735px;width:72px;height:18px;">Turn</div>
<div style="left:979px;top:766px;width:158px;height:11px;overflow:hidden"><div style="left:0;top:0;width:158px;height:16px;background:#b4b4b4;border:1px solid #000;box-shadow:inset 1px 1px 0 #d8d8d8;text-align:center;line-height:13px">Edit Geometry</div><div class="t" style="left:7px;top:1px">-</div></div>
<div style="left:966px;top:776px;width:186px;height:7px;background:#c8c8c8"></div>
<div style="left:969px;top:783px;width:183px;height:1px;background:#7a7a7a"></div>
<div style="left:0px;top:739px;width:966px;height:18px;background:#c0c0c0"></div>
<div style="left:0px;top:740px;width:16px;height:17px;background:#c8c8c8;border-top:1px solid #f0f0f0;border-left:1px solid #f0f0f0;border-right:1px solid #8a8a8a;border-bottom:1px solid #8a8a8a"></div>
<svg style="left:5px;top:744px" width="5" height="9"><path d="M4.5 0.5 L0.5 4.5 L4.5 8.5" stroke="#000" fill="none"/></svg>
<div style="left:16px;top:739px;width:125px;height:18px;background:#c8c8c8;border-top:1px solid #f0f0f0;border-left:1px solid #f0f0f0;border-right:2px solid #000;border-bottom:2px solid #000;text-align:center;line-height:15px">0 / 100</div>
<div style="left:141px;top:740px;width:16px;height:17px;background:#c8c8c8;border-top:1px solid #f0f0f0;border-left:1px solid #f0f0f0;border-right:1px solid #8a8a8a;border-bottom:1px solid #8a8a8a"></div>
<svg style="left:146px;top:744px" width="5" height="9"><path d="M0.5 0.5 L4.5 4.5 L0.5 8.5" stroke="#000" fill="none"/></svg>
<div style="left:0px;top:757px;width:968px;height:1px;background:#f0f0f0"></div>
<div style="left:0px;top:758px;width:968px;height:1px;background:#7a7a7a"></div>
<div style="left:58px;top:759px;width:859px;height:25px;background:repeating-conic-gradient(#c4c4c4 0 25%,#e2e2e2 0 50%) 0 0/2px 2px"></div>
<div style="left:50px;top:759px;width:9px;height:25px;background:#8eb0d0;border:1px solid #6a7a8a"></div>
<div class="t" style="left:51px;top:770px;color:#000">0</div>
<div style="left:63px;top:759px;width:1px;height:11px;background:#777"></div><div style="left:71px;top:759px;width:1px;height:11px;background:#777"></div><div style="left:80px;top:759px;width:1px;height:11px;background:#777"></div><div style="left:88px;top:759px;width:1px;height:11px;background:#777"></div><div style="left:97px;top:759px;width:1px;height:11px;background:#777"></div><div style="left:106px;top:759px;width:1px;height:11px;background:#777"></div><div style="left:114px;top:759px;width:1px;height:11px;background:#777"></div><div style="left:123px;top:759px;width:1px;height:11px;background:#777"></div><div style="left:131px;top:759px;width:1px;height:11px;background:#777"></div><div style="left:140px;top:759px;width:1px;height:25px;background:#777"></div><div style="left:149px;top:759px;width:1px;height:11px;background:#777"></div><div style="left:157px;top:759px;width:1px;height:11px;background:#777"></div><div style="left:166px;top:759px;width:1px;height:11px;background:#777"></div><div style="left:174px;top:759px;width:1px;height:11px;background:#777"></div><div style="left:183px;top:759px;width:1px;height:11px;background:#777"></div><div style="left:192px;top:759px;width:1px;height:11px;background:#777"></div><div style="left:200px;top:759px;width:1px;height:11px;background:#777"></div><div style="left:209px;top:759px;width:1px;height:11px;background:#777"></div><div style="left:217px;top:759px;width:1px;height:11px;background:#777"></div><div style="left:226px;top:759px;width:1px;height:25px;background:#777"></div><div style="left:235px;top:759px;width:1px;height:11px;background:#777"></div><div style="left:243px;top:759px;width:1px;height:11px;background:#777"></div><div style="left:252px;top:759px;width:1px;height:11px;background:#777"></div><div style="left:260px;top:759px;width:1px;height:11px;background:#777"></div><div style="left:269px;top:759px;width:1px;height:11px;background:#777"></div><div style="left:278px;top:759px;width:1px;height:11px;background:#777"></div><div style="left:286px;top:759px;width:1px;height:11px;background:#777"></div><div style="left:295px;top:759px;width:1px;height:11px;background:#777"></div><div style="left:303px;top:759px;width:1px;height:11px;background:#777"></div><div style="left:312px;top:759px;width:1px;height:25px;background:#777"></div><div style="left:321px;top:759px;width:1px;height:11px;background:#777"></div><div style="left:329px;top:759px;width:1px;height:11px;background:#777"></div><div style="left:338px;top:759px;width:1px;height:11px;background:#777"></div><div style="left:346px;top:759px;width:1px;height:11px;background:#777"></div><div style="left:355px;top:759px;width:1px;height:11px;background:#777"></div><div style="left:364px;top:759px;width:1px;height:11px;background:#777"></div><div style="left:372px;top:759px;width:1px;height:11px;background:#777"></div><div style="left:381px;top:759px;width:1px;height:11px;background:#777"></div><div style="left:389px;top:759px;width:1px;height:11px;background:#777"></div><div style="left:398px;top:759px;width:1px;height:25px;background:#777"></div><div style="left:407px;top:759px;width:1px;height:11px;background:#777"></div><div style="left:415px;top:759px;width:1px;height:11px;background:#777"></div><div style="left:424px;top:759px;width:1px;height:11px;background:#777"></div><div style="left:432px;top:759px;width:1px;height:11px;background:#777"></div><div style="left:441px;top:759px;width:1px;height:11px;background:#777"></div><div style="left:450px;top:759px;width:1px;height:11px;background:#777"></div><div style="left:458px;top:759px;width:1px;height:11px;background:#777"></div><div style="left:467px;top:759px;width:1px;height:11px;background:#777"></div><div style="left:475px;top:759px;width:1px;height:11px;background:#777"></div><div style="left:484px;top:759px;width:1px;height:25px;background:#777"></div><div style="left:493px;top:759px;width:1px;height:11px;background:#777"></div><div style="left:501px;top:759px;width:1px;height:11px;background:#777"></div><div style="left:510px;top:759px;width:1px;height:11px;background:#777"></div><div style="left:518px;top:759px;width:1px;height:11px;background:#777"></div><div style="left:527px;top:759px;width:1px;height:11px;background:#777"></div><div style="left:536px;top:759px;width:1px;height:11px;background:#777"></div><div style="left:544px;top:759px;width:1px;height:11px;background:#777"></div><div style="left:553px;top:759px;width:1px;height:11px;background:#777"></div><div style="left:561px;top:759px;width:1px;height:11px;background:#777"></div><div style="left:570px;top:759px;width:1px;height:25px;background:#777"></div><div style="left:579px;top:759px;width:1px;height:11px;background:#777"></div><div style="left:587px;top:759px;width:1px;height:11px;background:#777"></div><div style="left:596px;top:759px;width:1px;height:11px;background:#777"></div><div style="left:604px;top:759px;width:1px;height:11px;background:#777"></div><div style="left:613px;top:759px;width:1px;height:11px;background:#777"></div><div style="left:622px;top:759px;width:1px;height:11px;background:#777"></div><div style="left:630px;top:759px;width:1px;height:11px;background:#777"></div><div style="left:639px;top:759px;width:1px;height:11px;background:#777"></div><div style="left:647px;top:759px;width:1px;height:11px;background:#777"></div><div style="left:656px;top:759px;width:1px;height:25px;background:#777"></div><div style="left:665px;top:759px;width:1px;height:11px;background:#777"></div><div style="left:673px;top:759px;width:1px;height:11px;background:#777"></div><div style="left:682px;top:759px;width:1px;height:11px;background:#777"></div><div style="left:690px;top:759px;width:1px;height:11px;background:#777"></div><div style="left:699px;top:759px;width:1px;height:11px;background:#777"></div><div style="left:708px;top:759px;width:1px;height:11px;background:#777"></div><div style="left:716px;top:759px;width:1px;height:11px;background:#777"></div><div style="left:725px;top:759px;width:1px;height:11px;background:#777"></div><div style="left:733px;top:759px;width:1px;height:11px;background:#777"></div><div style="left:742px;top:759px;width:1px;height:25px;background:#777"></div><div style="left:751px;top:759px;width:1px;height:11px;background:#777"></div><div style="left:759px;top:759px;width:1px;height:11px;background:#777"></div><div style="left:768px;top:759px;width:1px;height:11px;background:#777"></div><div style="left:776px;top:759px;width:1px;height:11px;background:#777"></div><div style="left:785px;top:759px;width:1px;height:11px;background:#777"></div><div style="left:794px;top:759px;width:1px;height:11px;background:#777"></div><div style="left:802px;top:759px;width:1px;height:11px;background:#777"></div><div style="left:811px;top:759px;width:1px;height:11px;background:#777"></div><div style="left:819px;top:759px;width:1px;height:11px;background:#777"></div><div style="left:828px;top:759px;width:1px;height:25px;background:#777"></div><div style="left:837px;top:759px;width:1px;height:11px;background:#777"></div><div style="left:845px;top:759px;width:1px;height:11px;background:#777"></div><div style="left:854px;top:759px;width:1px;height:11px;background:#777"></div><div style="left:862px;top:759px;width:1px;height:11px;background:#777"></div><div style="left:871px;top:759px;width:1px;height:11px;background:#777"></div><div style="left:880px;top:759px;width:1px;height:11px;background:#777"></div><div style="left:888px;top:759px;width:1px;height:11px;background:#777"></div><div style="left:897px;top:759px;width:1px;height:11px;background:#777"></div><div style="left:905px;top:759px;width:1px;height:11px;background:#777"></div><div style="left:914px;top:759px;width:1px;height:25px;background:#777"></div>
<div class="t" style="left:134px;top:770px;">10</div>
<div class="t" style="left:220px;top:770px;">20</div>
<div class="t" style="left:306px;top:770px;">30</div>
<div class="t" style="left:392px;top:770px;">40</div>
<div class="t" style="left:478px;top:770px;">50</div>
<div class="t" style="left:564px;top:770px;">60</div>
<div class="t" style="left:650px;top:770px;">70</div>
<div class="t" style="left:736px;top:770px;">80</div>
<div class="t" style="left:822px;top:770px;">90</div>
<div class="t" style="left:905px;top:770px;">100</div>
<svg style="left:13px;top:763px" width="18" height="17" viewBox="0 0 18 17"><rect x="0.5" y="0.5" width="17" height="4" fill="#fff" stroke="#000"/><path d="M3 3 q2 -2 4 0 q2 2 4 0 q2 -2 4 0" stroke="#000" fill="none" stroke-width="0.8"/><path d="M4.5 12 v-5 M2.5 9 l2 -2 l2 2 M13.5 7 v5 M11.5 10 l2 2 l2 -2" stroke="#000" fill="none"/><rect x="0.5" y="13.5" width="17" height="3" fill="#fff" stroke="#000"/></svg>
<div style="left:0px;top:784px;width:966px;height:50px;background:#c8c8c8"></div>
<div style="left:2px;top:787px;width:96px;height:22px;background:#dcc8c8;border-top:2px solid #7a7060;border-left:2px solid #7a7060;border-right:1px solid #fff;border-bottom:1px solid #fff"></div>
<div style="left:2px;top:810px;width:96px;height:22px;background:#fefefe;border-top:2px solid #7a7060;border-left:2px solid #7a7060;border-right:1px solid #fff;border-bottom:1px solid #fff"></div>
<div style="left:104px;top:784px;width:1px;height:50px;background:#8a8a8a"></div>
<div style="left:105px;top:784px;width:1px;height:50px;background:#f0f0f0"></div>
<div class="stat" style="left:107px;top:788px;width:200px;height:21px;"></div>
<div class="t" style="left:113px;top:793px;">1 Object Selected</div>
<div class="stat" style="left:107px;top:813px;width:500px;height:21px;"></div>
<div class="t" style="left:113px;top:818px;">Rendering Time  0:00:00</div>
<svg style="left:315px;top:791px" width="11" height="13" viewBox="0 0 11 13"><path d="M2.5 6 V3.5 a3 3 0 0 1 6 0 V6" stroke="#000" fill="none" stroke-width="1.3"/><rect x="0.5" y="6.5" width="10" height="6" fill="#000"/><path d="M1 8.5 h9 M1 10.5 h9" stroke="#c8c8c8"/></svg>
<div style="left:340px;top:790px;width:16px;height:16px;border-top:1px solid #f0f0f0;border-left:1px solid #f0f0f0;border-right:1px solid #000;border-bottom:1px solid #000"><div style="left:4px;top:4px;width:6px;height:6px;border:1px solid #000;border-radius:50%"></div><div style="left:6px;top:1px;width:1px;height:12px;background:#000"></div><div style="left:1px;top:6px;width:12px;height:1px;background:#000"></div></div>
<div class="t" style="left:362px;top:793px;">X:</div>
<div style="left:374px;top:789px;width:56px;height:20px;background:#e6e6e6;border-top:2px solid #101010;border-left:2px solid #101010;border-right:1px solid #f0f0f0;border-bottom:1px solid #f0f0f0"></div>
<div class="t" style="left:377px;top:793px;color:#808080">-42.269</div>
<div class="t" style="left:444px;top:793px;">Y:</div>
<div style="left:455px;top:789px;width:58px;height:20px;background:#e6e6e6;border-top:2px solid #101010;border-left:2px solid #101010;border-right:1px solid #f0f0f0;border-bottom:1px solid #f0f0f0"></div>
<div class="t" style="left:458px;top:793px;color:#808080">-74.196</div>
<div class="t" style="left:527px;top:793px;">Z:</div>
<div style="left:537px;top:789px;width:57px;height:20px;background:#e6e6e6;border-top:2px solid #101010;border-left:2px solid #101010;border-right:1px solid #f0f0f0;border-bottom:1px solid #f0f0f0"></div>
<div class="t" style="left:540px;top:793px;color:#808080">0.0</div>
<div class="stat" style="left:609px;top:788px;width:100px;height:21px;"></div>
<div class="t" style="left:616px;top:793px;">Grid = 10.0</div>
<div class="stat" style="left:609px;top:813px;width:100px;height:21px;"></div>
<div class="t" style="left:616px;top:818px;">Add Time Tag</div>
<div style="left:710px;top:787px;width:44px;height:44px;border-top:1px solid #f0f0f0;border-left:1px solid #f0f0f0;border-right:1px solid #6a6a6a;border-bottom:1px solid #6a6a6a"></div>
<svg style="left:721px;top:803px" width="24" height="12" viewBox="0 0 24 12"><circle cx="5" cy="5.5" r="3.8" fill="none" stroke="#000" stroke-width="2"/><path d="M9 5.5 h14" stroke="#000" stroke-width="2.5"/><path d="M16 6 v4 M20 6 v4" stroke="#000" stroke-width="2"/></svg>
<div class="btn" style="left:758px;top:787px;width:47px;height:22px;line-height:20px">Auto Key</div>
<div class="btn" style="left:758px;top:809px;width:47px;height:22px;line-height:21px">Set Key</div>
<div style="left:808px;top:788px;width:115px;height:20px;background:#e6e6e6;border-top:2px solid #5a5a5a;border-left:2px solid #5a5a5a;border-right:1px solid #f4f4f4;border-bottom:1px solid #f4f4f4"></div>
<div class="t" style="left:812px;top:792px;">Selected</div>
<div style="left:905px;top:789px;width:17px;height:17px;background:#ece9d8;border-top:1px solid #fff;border-left:1px solid #fff;border-right:1px solid #808080;border-bottom:1px solid #808080"></div>
<svg style="left:909px;top:795px" width="9" height="5"><path d="M0 0 h9 L4.5 5 Z" fill="#000"/></svg>
<div class="btn" style="left:808px;top:810px;width:115px;height:21px;line-height:20px">Key Filters...</div>
<div style="left:966px;top:783px;width:186px;height:51px;background:#c8c8c8"></div>
<div style="left:969px;top:783px;width:183px;height:1px;background:#7a7a7a"></div>
<svg style="left:920px;top:784px" width="232" height="50" viewBox="920 784 232 50">
<rect x="932" y="792" width="2" height="11" fill="#000"/><path d="M934 797.5 L941 792.5 L941 802.5 Z M941 797.5 L948 792.5 L948 802.5 Z" fill="#000"/>
<rect x="953" y="790" width="1" height="16" fill="#7a7a7a"/><rect x="954" y="790" width="1" height="16" fill="#f4f4f4"/>
<path d="M960 797.5 L966 792.5 L966 802.5 Z" fill="#000"/><rect x="967" y="793" width="2" height="9" fill="#000"/><rect x="971" y="793" width="2" height="9" fill="#000"/>
<rect x="981.5" y="790.5" width="15" height="14" fill="none" stroke="#000" stroke-width="2"/><path d="M986 793.5 L993 797.5 L986 801.5 Z" fill="#000"/><path d="M996 808 L999 805 L999 808 Z" fill="#000"/>
<rect x="1005" y="793" width="2" height="9" fill="#000"/><rect x="1009" y="793" width="2" height="9" fill="#000"/><path d="M1012 792.5 L1018 797.5 L1012 802.5 Z" fill="#000"/>
<rect x="1025" y="790" width="1" height="16" fill="#7a7a7a"/><rect x="1026" y="790" width="1" height="16" fill="#f4f4f4"/>
<path d="M1030 792.5 L1037 797.5 L1030 802.5 Z M1037 792.5 L1044 797.5 L1037 802.5 Z" fill="#000"/><rect x="1044" y="792" width="2" height="11" fill="#000"/>
<rect x="1054" y="790" width="1" height="16" fill="#7a7a7a"/><rect x="1055" y="790" width="1" height="16" fill="#f4f4f4"/>
<circle cx="1065" cy="795" r="4.5" fill="#e8f0ff" stroke="#1a2a7a" stroke-width="1.2"/><path d="M1068 798 L1074 804" stroke="#1a2a9a" stroke-width="2.2"/>
<rect x="1086.5" y="790.5" width="11" height="10" fill="none" stroke="#b02020"/><path d="M1092 790.5 v10 M1086.5 795.5 h11" stroke="#b02020"/><circle cx="1087" cy="800" r="3.5" fill="#e8f0ff" stroke="#1a2a7a"/><path d="M1089.5 802.5 L1093 806" stroke="#1a2a9a" stroke-width="1.8"/>
<path d="M1105.5 794 v-3.5 h3.5 M1117.5 790.5 h3.5 v3.5 M1121 802 v3.5 h-3.5 M1109 805.5 h-3.5 v-3.5" stroke="#000" fill="none"/><rect x="1108.5" y="795.5" width="8" height="8" fill="#c8d0f0" stroke="#1a2a8a"/><path d="M1108.5 795.5 l3 -3 h8 v8 l-3 3 M1116.5 795.5 l3 -3" stroke="#1a2a8a" fill="none"/><path d="M1122 808 L1125 805 L1125 808 Z" fill="#000"/>
<rect x="1133.5" y="790.5" width="11" height="10" fill="none" stroke="#b02020"/><path d="M1139 790.5 v10 M1133.5 795.5 h11" stroke="#b02020"/><rect x="1128.5" y="797.5" width="7" height="7" fill="#c8d0f0" stroke="#1a2a8a"/><path d="M1128.5 797.5 l2.5 -2.5 h7 v7 l-2.5 2.5" stroke="#1a2a8a" fill="none"/><path d="M1145 808 L1148 805 L1148 808 Z" fill="#000"/>
<rect x="934" y="814" width="2" height="10" fill="#000"/><rect x="945" y="814" width="2" height="10" fill="#000"/><path d="M936 819 L940 815 L940 823 Z M945 819 L941 815 L941 823 Z" fill="#000"/>
<rect x="953" y="811" width="1" height="18" fill="#7a7a7a"/><rect x="954" y="811" width="1" height="18" fill="#f4f4f4"/>
<rect x="1036.5" y="812.5" width="11" height="12" fill="#fff" stroke="#404040"/><rect x="1037" y="813" width="10" height="2" fill="#404040"/><circle cx="1045" cy="823" r="4" fill="#fff" stroke="#c02020" stroke-width="1.2"/><path d="M1045 820.5 v3 h2" stroke="#c02020" fill="none"/>
<rect x="1054" y="811" width="1" height="18" fill="#7a7a7a"/><rect x="1055" y="811" width="1" height="18" fill="#f4f4f4"/>
<path d="M1059 812 L1074 819.5 L1059 827 Z" fill="url(#dith)" stroke="#000" stroke-width="1.5"/><path d="M1075 832 L1078 829 L1078 832 Z" fill="#000"/>
<defs><pattern id="dith" width="2" height="2" patternUnits="userSpaceOnUse"><rect width="2" height="2" fill="#c8c8c8"/><rect width="1" height="1" fill="#f0f0f0"/><rect x="1" y="1" width="1" height="1" fill="#f0f0f0"/></pattern></defs>
<path d="M1085 821 L1084 816 Q1084 814 1086 815 L1087 818 L1087 812 Q1088 810 1089.5 812 L1090 817 L1090.5 811 Q1092 809 1093 811 L1093 817 L1094 812.5 Q1095.5 811 1096.5 813 L1096 822 Q1095 827 1091 828 Q1087 828 1085 821 Z" fill="#fff" stroke="#000" stroke-width="1"/><path d="M1098 832 L1101 829 L1101 832 Z" fill="#000"/>
<ellipse cx="1113" cy="821" rx="7" ry="4" fill="none" stroke="#1a2a8a" stroke-width="1.2"/><path d="M1113 812 v13 M1106 826 l7 -5 l8 0" stroke="#1a2a8a" stroke-width="1.2" fill="none"/><path d="M1111 813.5 l2 -3 l2 3 Z" fill="#000"/><path d="M1122 832 L1125 829 L1125 832 Z" fill="#000"/>
<rect x="1128.5" y="811.5" width="10" height="10" fill="#c8d0f0" stroke="#1a2a8a" stroke-width="1.2"/><rect x="1133.5" y="816.5" width="10" height="11" fill="none" stroke="#000" stroke-width="1.2"/><path d="M1131 814 L1136 819" stroke="#000"/>
</svg>
<div style="left:955px;top:810px;width:64px;height:20px;background:#e6e6e6;border-top:2px solid #101010;border-left:2px solid #101010;border-right:1px solid #f0f0f0;border-bottom:1px solid #f0f0f0"></div>
<div class="t" style="left:959px;top:814px;">0</div>
<div style="left:1020px;top:810px;width:10px;height:20px;border-top:1px solid #f0f0f0;border-left:1px solid #f0f0f0;border-right:1px solid #6a6a6a;border-bottom:1px solid #6a6a6a"></div>
<svg style="left:1021px;top:813px" width="8" height="14"><path d="M4 1 L7 5 H1 Z M1 9 H7 L4 13 Z" fill="#000"/><path d="M0 7 H8" stroke="#8a8a8a"/></svg>
<div style="left:0px;top:834px;width:1152px;height:2px;background:#2a6ae8"></div>
<div style="left:0px;top:834px;width:93px;height:2px;background:#3c9a3c"></div>
</body></html>
